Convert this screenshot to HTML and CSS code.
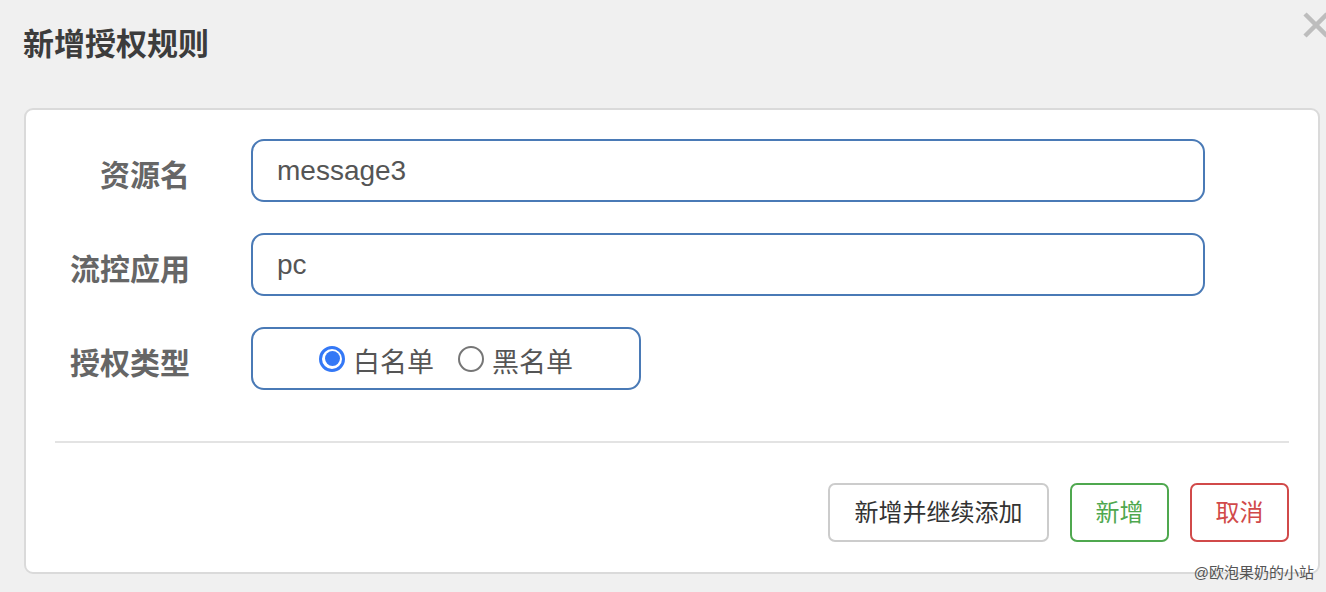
FILE: index.html
```html
<!DOCTYPE html>
<html lang="zh-CN">
<head>
<meta charset="utf-8">
<title>新增授权规则</title>
<link rel="stylesheet" href="styles.css">
</head>
<body>
<div class="dialog">
  <div class="dialog-header">
    <h1 class="dialog-title">新增授权规则</h1>
    <span class="close-btn" aria-label="关闭">
      <svg width="23" height="26" viewBox="0 0 23 26"><path d="M2 2 L24 24 M24 2 L2 24" stroke="#bdbdbd" stroke-width="4.5" fill="none"/></svg>
    </span>
  </div>
  <div class="panel">
    <form class="form">
      <label class="form-label">资源名</label>
      <div class="form-control">message3</div>
      <label class="form-label">流控应用</label>
      <div class="form-control">pc</div>
      <label class="form-label">授权类型</label>
      <div class="radio-box">
        <span class="radio-item"><span class="radio checked"></span>白名单</span>
        <span class="radio-item"><span class="radio"></span>黑名单</span>
      </div>
    </form>
    <div class="divider"></div>
    <div class="actions">
      <button class="btn btn-default" type="button">新增并继续添加</button>
      <button class="btn btn-success" type="button">新增</button>
      <button class="btn btn-danger" type="button">取消</button>
    </div>
  </div>
</div>
<div class="watermark">@欧泡果奶的小站</div>
</body>
</html>
```

FILE: styles.css
```css
html, body {
  margin: 0;
  padding: 0;
}
body {
  background: #f0f0f0;
  font-family: "Liberation Sans", "Noto Sans CJK SC", sans-serif;
  overflow: hidden;
  width: 1326px;
  height: 592px;
  position: relative;
}
.dialog {
  padding: 0 6px 0 24px;
}
.dialog-header {
  position: relative;
  height: 108px;
  box-sizing: border-box;
  padding-top: 25px;
}
.dialog-title {
  margin: 0 0 0 -1px;
  font-size: 31px;
  line-height: 40px;
  font-weight: 700;
  color: #3c3c3c;
}
.close-btn {
  position: absolute;
  right: -6px;
  top: 12px;
  width: 23px;
  height: 26px;
  display: block;
}
.close-btn svg {
  display: block;
}
.panel {
  background: #fff;
  border: 2px solid #dadada;
  border-radius: 9px;
  padding: 29px 29px 30px 29px;
  height: 466px;
  box-sizing: border-box;
}
.form {
  display: grid;
  grid-template-columns: 134px 954px;
  column-gap: 62px;
  row-gap: 31px;
  align-items: center;
}
.form-label {
  text-align: right;
  font-size: 30px;
  font-weight: 700;
  color: #666;
  line-height: 40px;
  padding-top: 10px;
  margin-right: -1px;
}
.form-control {
  height: 63px;
  box-sizing: border-box;
  border: 2px solid #4a7ab6;
  border-radius: 13px;
  padding: 0 24px;
  display: flex;
  align-items: center;
  font-size: 28px;
  color: #555;
}
.radio-box {
  width: 390px;
  height: 63px;
  box-sizing: border-box;
  border: 2px solid #4a7ab6;
  border-radius: 13px;
  display: flex;
  align-items: center;
  justify-content: center;
  gap: 24px;
  font-size: 27px;
  color: #555;
  padding-top: 3px;
}
.radio-item {
  display: flex;
  align-items: center;
  gap: 8px;
}
.radio {
  width: 26px;
  height: 26px;
  box-sizing: border-box;
  border-radius: 50%;
  border: 2px solid #767676;
  background: #fff;
  position: relative;
  margin-top: -3px;
}
.radio.checked {
  border: 3px solid #3478f6;
}
.radio.checked::after {
  content: "";
  position: absolute;
  left: 2.5px;
  top: 2.5px;
  width: 15px;
  height: 15px;
  border-radius: 50%;
  background: #3478f6;
}
.divider {
  height: 2px;
  background: #e3e3e3;
  margin-top: 51px;
}
.actions {
  display: flex;
  justify-content: flex-end;
  gap: 21px;
  margin-top: 40px;
}
.btn {
  height: 59px;
  box-sizing: border-box;
  border: 2px solid #ccc;
  border-radius: 7px;
  background: #fff;
  padding: 0 23.5px;
  font-family: "Liberation Sans", "Noto Sans CJK SC", sans-serif;
  font-size: 24px;
  color: #333;
  line-height: 1;
}
.btn-default {
  padding: 0 24.5px;
}
.btn-success {
  border-color: #4fa84f;
  color: #4fa84f;
}
.btn-danger {
  border-color: #d14a4a;
  color: #d14a4a;
}
.watermark {
  position: absolute;
  right: 12px;
  top: 562px;
  font-size: 15px;
  line-height: 22px;
  color: #555;
}
```
